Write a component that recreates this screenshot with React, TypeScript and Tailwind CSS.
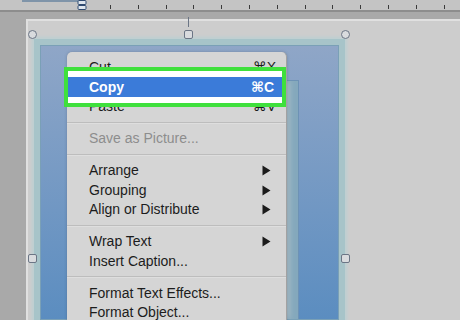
import { Fragment } from "react";

type MenuRow =
  | { kind: "item"; label: string; shortcut?: string; submenu?: boolean; disabled?: boolean; covered?: boolean }
  | { kind: "sep" };

const rows: MenuRow[] = [
  { kind: "item", label: "Cut", shortcut: "⌘X" },
  { kind: "item", label: "Copy", shortcut: "⌘C", covered: true },
  { kind: "item", label: "Paste", shortcut: "⌘V" },
  { kind: "sep" },
  { kind: "item", label: "Save as Picture...", disabled: true },
  { kind: "sep" },
  { kind: "item", label: "Arrange", submenu: true },
  { kind: "item", label: "Grouping", submenu: true },
  { kind: "item", label: "Align or Distribute", submenu: true },
  { kind: "sep" },
  { kind: "item", label: "Wrap Text", submenu: true },
  { kind: "item", label: "Insert Caption..." },
  { kind: "sep" },
  { kind: "item", label: "Format Text Effects..." },
  { kind: "item", label: "Format Object..." },
];

const Arrow = () => (
  <svg width="9" height="11" viewBox="0 0 9 11" className="mr-[5px]">
    <path d="M0.5 0.5 L8.5 5.5 L0.5 10.5 Z" fill="#1b1b1b" />
  </svg>
);

const Handle = ({ round, className }: { round?: boolean; className: string }) => (
  <div
    className={`absolute w-[9px] h-[9px] border border-[#6b7585] bg-[#d9dbde] ${
      round ? "rounded-full" : "rounded-[2px]"
    } ${className}`}
  />
);

const Ruler = () => (
  <div className="relative h-[12px] bg-[#c4c4c4] border-b-2 border-[#8d8d8d] shrink-0">
    <div className="absolute left-[22px] top-0 w-[56px] h-[2px] bg-[#7f94a9]" />
    <svg width="10" height="11" viewBox="0 0 10 11" className="absolute left-[77px] top-0">
      <rect x="1" y="0.5" width="8" height="4" rx="1" fill="#dfe6ee" stroke="#2f4a70" />
      <rect x="1" y="5.5" width="8" height="4" rx="1" fill="#dfe6ee" stroke="#2f4a70" />
    </svg>
    <div className="flex gap-[26.8px] pl-[110px] pt-[5px]">
      {Array.from({ length: 13 }).map((_, i) => (
        <div key={i} className="w-px h-[4px] bg-[#3a3a3a]" />
      ))}
    </div>
  </div>
);

const ContextMenu = () => (
  <div className="absolute left-[67px] top-[52px] w-[220px] h-[290px] bg-[#d5d5d5] rounded-t-[5px] border-r border-[#a2a2a2] shadow-[0_0_3px_rgba(60,70,90,0.35)] pt-[6px]">
    {rows.map((row, i) =>
      row.kind === "sep" ? (
        <div key={i} className="h-[12.5px] flex flex-col justify-center">
          <div className="h-px bg-[#bdbdbd]" />
          <div className="h-px bg-[#dedede]" />
        </div>
      ) : (
        <div
          key={i}
          className={`h-[19.5px] flex items-center justify-between pl-[22px] pr-[10px] text-[14px] ${
            row.disabled ? "text-[#8d8d8d]" : "text-[#1c1c1c]"
          } ${row.covered ? "invisible" : ""}`}
        >
          <span>{row.label}</span>
          {row.shortcut && <span>{row.shortcut}</span>}
          {row.submenu && <Arrow />}
        </div>
      )
    )}
  </div>
);

export default function App() {
  return (
    <div
      className="relative w-[460px] h-[320px] overflow-hidden bg-[#a6a6a6] flex flex-col"
      style={{ fontFamily: '"Liberation Sans", Arial, "DejaVu Sans", sans-serif' }}
    >
      <Ruler />
      <div className="flex-1 flex pt-[7px] pl-[26px] bg-[#a9a9a9]">
        <div className="relative flex-1 bg-[#cdcdcd] border-t-2 border-l-2 border-[#e0e0e0] pl-[6px] pt-[18px] flex">
          <div className="w-[311px] bg-[#a7c4c9] shadow-[0_0_3px_2px_#bccfd2] pt-[6px] px-[6px] flex flex-col">
            <div className="flex-1 border border-[#7aa0b6] bg-gradient-to-b from-[#8fa6c7] to-[#5b8dc0] pt-[34px] pl-[40px] pr-[39px] flex flex-col">
              <div className="flex-1 bg-[#b0c1c8] border-t border-r border-[#6d92b5] shadow-[inset_-9px_0_6px_#84a8bc]" />
            </div>
          </div>

          <div className="absolute left-[160px] top-[-4px] w-px h-[10px] bg-[#6b7585]" />
          <Handle round className="left-0 top-[9px]" />
          <Handle className="left-[156px] top-[9px]" />
          <Handle round className="left-[313px] top-[9px]" />
          <Handle className="left-0 top-[233px]" />
          <Handle className="left-[313px] top-[233px]" />
        </div>
      </div>

      <ContextMenu />

      <div className="absolute left-[64px] top-[67px] w-[222px] h-[40px] border-[4px] border-[#3fe03c] bg-white flex flex-col justify-center">
        <div className="h-[20px] bg-[#3b7bd9] flex items-center justify-between pl-[21px] pr-[8px] text-white text-[14px] font-bold">
          <Fragment>
            <span>Copy</span>
            <span>⌘C</span>
          </Fragment>
        </div>
      </div>
    </div>
  );
}
